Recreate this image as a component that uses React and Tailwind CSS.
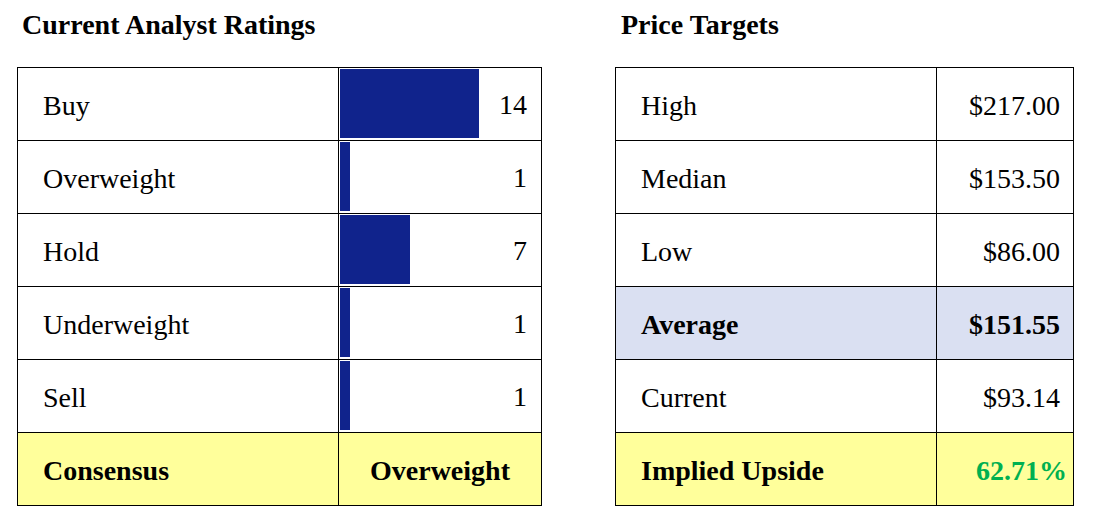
const ratings = [
  { label: "Buy", count: 14 },
  { label: "Overweight", count: 1 },
  { label: "Hold", count: 7 },
  { label: "Underweight", count: 1 },
  { label: "Sell", count: 1 },
];

const targets = [
  { label: "High", value: "$217.00" },
  { label: "Median", value: "$153.50" },
  { label: "Low", value: "$86.00" },
  { label: "Average", value: "$151.55", avg: true },
  { label: "Current", value: "$93.14" },
];

const serif = "font-['Liberation_Serif',Georgia,serif]";

export default function App() {
  return (
    <div className={`${serif} bg-white text-black w-[1093px] h-[527px] flex gap-[73px] pl-[17px] pt-[9px]`}>
      <div>
        <h2 className="pl-[5px] text-[28px] font-bold leading-[32px] h-[58px]">
          Current Analyst Ratings
        </h2>
        <div className="grid grid-cols-[321px_203px] border-l border-t border-black text-[28px]">
          {ratings.map((r) => (
            <div key={r.label} className="contents">
              <div className="h-[73px] border-r border-b border-black flex items-center pl-[25px] pt-[3px]">
                {r.label}
              </div>
              <div className="h-[73px] border-r border-b border-black flex items-stretch pt-[1px] pb-[2px] pl-[1px]">
                <div
                  className="bg-[#10238c]"
                  style={{ width: Math.round(r.count * 9.93) }}
                />
                <span className="ml-auto self-center pr-[14px] pt-[3px]">{r.count}</span>
              </div>
            </div>
          ))}
          <div className="h-[73px] border-r border-b border-black bg-[#ffff9b] flex items-center pl-[25px] pt-[3px] font-bold">
            Consensus
          </div>
          <div className="h-[73px] border-r border-b border-black bg-[#ffff9b] flex items-center justify-center pt-[3px] font-bold">
            Overweight
          </div>
        </div>
      </div>

      <div>
        <h2 className="pl-[6px] text-[28px] font-bold leading-[32px] h-[58px]">
          Price Targets
        </h2>
        <div className="grid grid-cols-[321px_137px] border-l border-t border-black text-[28px]">
          {targets.map((t) => (
            <div key={t.label} className="contents">
              <div
                className={`h-[73px] border-r border-b border-black flex items-center pl-[25px] pt-[3px] ${
                  t.avg ? "bg-[#dae0f2] font-bold" : ""
                }`}
              >
                {t.label}
              </div>
              <div
                className={`h-[73px] border-r border-b border-black flex items-center justify-end pr-[13px] pt-[3px] ${
                  t.avg ? "bg-[#dae0f2] font-bold" : ""
                }`}
              >
                {t.value}
              </div>
            </div>
          ))}
          <div className="h-[73px] border-r border-b border-black bg-[#ffff9b] flex items-center pl-[25px] pt-[3px] font-bold">
            Implied Upside
          </div>
          <div className="h-[73px] border-r border-b border-black bg-[#ffff9b] flex items-center justify-end pr-[6px] pt-[3px] font-bold text-[#00b050]">
            62.71%
          </div>
        </div>
      </div>
    </div>
  );
}
